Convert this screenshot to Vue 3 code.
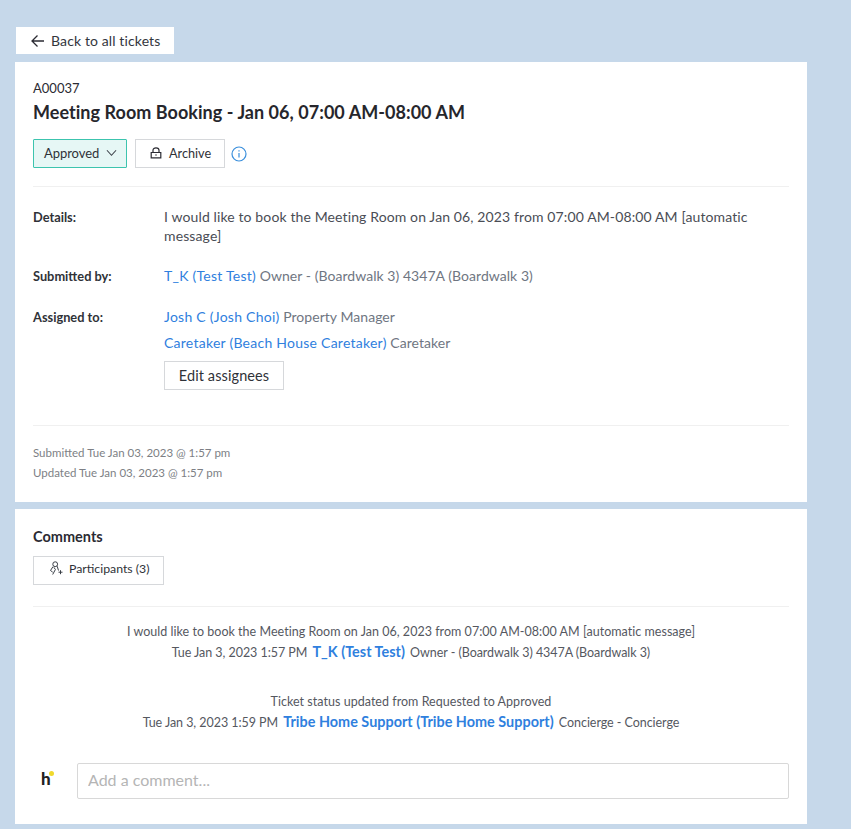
<script setup>
const assignees = [
  { name: 'Josh C (Josh Choi)', role: 'Property Manager' },
  { name: 'Caretaker (Beach House Caretaker)', role: 'Caretaker' },
]
</script>

<template>
  <div class="page">
    <a class="back">
      <svg width="16" height="16" viewBox="0 0 16 16" fill="none" stroke="#2b2b33" stroke-width="1.3"><path d="M14 8H2.5M7.5 2.5 2 8l5.5 5.5"/></svg>
      <span>Back to all tickets</span>
    </a>
    <section class="card first">
      <div class="code">A00037</div>
      <h1>Meeting Room Booking - Jan 06, 07:00 AM-08:00 AM</h1>
      <div class="actions">
        <button class="status">Approved
          <svg width="11" height="8" viewBox="0 0 12 8" fill="none" stroke="#3a3f47" stroke-width="1.1"><path d="M1 1l5 5.5L11 1"/></svg>
        </button>
        <button class="archive">
          <svg width="12" height="12" viewBox="0 0 12 12" fill="none" stroke="#2b2b33" stroke-width="1.2"><path d="M3 5.5V3.2a3 2.4 0 0 1 6 0v2.3M1.2 5.5h9.6v5.3H1.2z"/><path d="M5.2 8h1.6"/></svg>
          Archive
        </button>
        <svg class="info" width="16" height="16" viewBox="0 0 16 16" fill="none" stroke="#3a8fdc" stroke-width="1.2"><circle cx="8" cy="8" r="7"/><path d="M8 7v4.5M8 4.2v1.4"/></svg>
      </div>
      <dl class="rows">
        <div class="row details">
          <dt>Details:</dt>
          <dd class="body-text">I would like to book the Meeting Room on Jan 06, 2023 from 07:00 AM-08:00 AM [automatic message]</dd>
        </div>
        <div class="row submitted">
          <dt>Submitted by:</dt>
          <dd class="grey"><a>T_K (Test Test)</a> Owner - (Boardwalk 3) 4347A (Boardwalk 3)</dd>
        </div>
        <div class="row">
          <dt>Assigned to:</dt>
          <dd class="grey assigned">
            <div v-for="a in assignees" :key="a.name" class="assignee"><a>{{ a.name }}</a> {{ a.role }}</div>
            <button class="edit">Edit assignees</button>
          </dd>
        </div>
      </dl>
      <div class="stamps">
        <div>Submitted Tue Jan 03, 2023 @ 1:57 pm</div>
        <div>Updated Tue Jan 03, 2023 @ 1:57 pm</div>
      </div>
    </section>
    <section class="card second">
      <h2>Comments</h2>
      <button class="participants">
        <svg width="14" height="15" viewBox="0 0 14 15" fill="none" stroke="#3a3f47" stroke-width="1"><circle cx="6.2" cy="3.2" r="2.4"/><path d="M1.5 9.5 4 5.6M8.2 5.2l1.3 4.3M1.5 9.5l2.2 1.6M4.8 6.2l1.6 2.3-2.7 5M9.5 11.2h4M11.5 9.2v4"/></svg>
        Participants (3)
      </button>
      <div class="feed">
        <div class="entry">
          <p>I would like to book the Meeting Room on Jan 06, 2023 from 07:00 AM-08:00 AM [automatic message]</p>
          <p class="meta">Tue Jan 3, 2023 1:57 PM <a>T_K (Test Test)</a> Owner - (Boardwalk 3) 4347A (Boardwalk 3)</p>
        </div>
        <div class="entry">
          <p>Ticket status updated from Requested to Approved</p>
          <p class="meta">Tue Jan 3, 2023 1:59 PM <a>Tribe Home Support (Tribe Home Support)</a> Concierge - Concierge</p>
        </div>
      </div>
      <div class="composer">
        <div class="logo">h<i></i></div>
        <input class="comment" placeholder="Add a comment..." />
      </div>
    </section>
  </div>
</template>

<style>
body { background: #c6d8ea; }
</style>

<style scoped>
.page {
  box-sizing: border-box;
  width: 851px;
  height: 829px;
  padding: 27px 44px 5px 15px;
  background: #c6d8ea;
  font-family: Lato, "Open Sans", sans-serif;
  color: #2b2b33;
  overflow: hidden;
}
.back {
  display: flex;
  align-items: center;
  gap: 5px;
  box-sizing: border-box;
  width: 158px;
  height: 27px;
  margin-left: 1px;
  margin-bottom: 8px;
  padding-left: 14px;
  background: #fff;
  font-size: 14px;
  letter-spacing: .12px;
  color: #33363d;
}
.card { background: #fff; padding: 0 18px; box-sizing: border-box; }
.first { height: 440px; margin-bottom: 7px; padding-top: 18px; }
.second { height: 315px; padding-top: 19px; }
.code { font-size: 13px; line-height: 16px; color: #2b2b33; }
h1 { margin: 4px 0 0; font-size: 18px; line-height: 24px; font-weight: 700; color: #26262c; letter-spacing: .04px; }
.actions {
  display: flex;
  align-items: center;
  margin-top: 15px;
  padding-bottom: 18px;
  border-bottom: 1px solid #f0f0f0;
}
button { font-family: inherit; cursor: pointer; background: #fff; box-sizing: border-box; border: 1px solid #d6d8db; color: #2f3238; padding: 0; }
.status {
  display: flex;
  align-items: center;
  gap: 7px;
  width: 94px;
  height: 29px;
  padding: 0 0 2px 10px;
  background: #e6f7f5;
  border-color: #3cc4ae;
  font-size: 13px;
  letter-spacing: -.05px;
  border-radius: 1px;
}
.archive {
  display: flex;
  align-items: center;
  gap: 7px;
  width: 90px;
  height: 29px;
  margin-left: 8px;
  padding: 0 0 2px 14px;
  font-size: 12.7px;
}
.info { margin-left: 6px; }
.rows { margin: 0; padding-top: 20px; }
.row { display: flex; margin-bottom: 21px; }
.row dt { width: 131px; flex: none; font-size: 12.8px; font-weight: 700; line-height: 20px; color: #2f3238; }
.row dd { margin: 0; font-size: 14px; line-height: 20px; letter-spacing: .05px; }
.row .body-text { color: #4a4d55; max-width: 600px; line-height: 19px; letter-spacing: .12px; }
.grey { color: #6f7682; }
a { color: #2f80de; }
.grey a { letter-spacing: .25px; }
.assignee { margin-bottom: 6px; }
.edit { display: block; width: 120px; height: 29px; margin-top: 8px; font-size: 14.5px; letter-spacing: .1px; }
.stamps {
  margin-top: 35px;
  padding-top: 17px;
  border-top: 1px solid #f0f0f0;
  font-size: 11.5px;
  line-height: 20px;
  color: #7d7f85;
}
h2 { margin: 0; font-size: 14.5px; line-height: 17px; font-weight: 700; color: #2b2b33; }
.participants {
  display: flex;
  align-items: center;
  gap: 6px;
  width: 131px;
  height: 29px;
  margin-top: 11px;
  padding: 0 0 4px 15px;
  font-size: 12.3px;
}
.feed { margin-top: 21px; padding-top: 15px; border-top: 1px solid #f0f0f0; text-align: center; font-size: 12.5px; letter-spacing: .03px; color: #55585f; }
.feed p { margin: 0; line-height: 20px; }
.feed .meta { letter-spacing: -.05px; }
.entry { height: 70px; }
.meta a { font-weight: 700; font-size: 14.4px; letter-spacing: .02px; margin: 0 2px; }
.composer { display: flex; align-items: center; margin-top: 1px; }
.logo { position: relative; width: 44px; padding: 0 0 6px 8px; box-sizing: border-box; font-size: 17px; font-weight: 900; color: #222; }
.logo i { position: absolute; left: 16px; top: 3px; width: 5px; height: 5px; border-radius: 50%; background: #f0d92c; }
.comment {
  box-sizing: border-box;
  width: 712px;
  height: 36px;
  padding: 0 10px 3px;
  border: 1px solid #d8d8d8;
  border-radius: 2px;
  font-family: inherit;
  font-size: 16px;
  outline: none;
}
.comment::placeholder { color: #b5b5b5; }
</style>
